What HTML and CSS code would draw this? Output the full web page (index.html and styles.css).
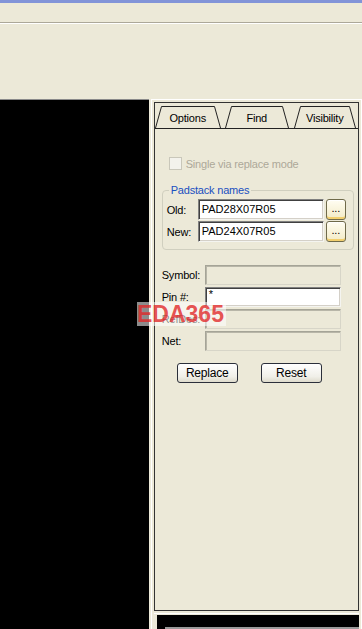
FILE: index.html
```html
<!DOCTYPE html>
<html>
<head>
  <title>Replace Padstack</title>
  <link rel="stylesheet" href="styles.css">
</head>
<body>
  <div class="titlebar"></div>
  <div class="menubar"></div>
  <div class="toolarea"></div>

  <div class="main">
    <div class="canvas"></div>

    <div class="side">
      <div class="panel">
        <!-- tabs -->
        <div class="tabs">
          <div class="tab tab-options">
            <svg class="tab-shape" width="66" height="22" viewBox="0 0 66 22"><polyline points="0.5,22 6.5,0.5 59.5,0.5 65.5,22" fill="none" stroke="#222" stroke-width="1"/></svg>
            <span>Options</span>
          </div>
          <div class="tab tab-find">
            <svg class="tab-shape" width="64" height="22" viewBox="0 0 64 22"><polyline points="0.5,22 6.5,0.5 57.5,0.5 63.5,22" fill="none" stroke="#222" stroke-width="1"/></svg>
            <span>Find</span>
          </div>
          <div class="tab tab-vis">
            <svg class="tab-shape" width="62" height="22" viewBox="0 0 62 22"><polyline points="0.5,22 6.5,0.5 55.5,0.5 61.5,22" fill="none" stroke="#222" stroke-width="1"/></svg>
            <span>Visibility</span>
          </div>
        </div>

        <div class="page">
          <div class="check-row">
            <span class="checkbox"></span>
            <span>Single via replace mode</span>
          </div>

          <div class="group">
            <span class="legend">Padstack names</span>
            <div class="name-row">
              <span class="name-label">Old:</span>
              <div class="field">PAD28X07R05</div>
              <div class="browse">...</div>
            </div>
            <div class="name-row">
              <span class="name-label">New:</span>
              <div class="field">PAD24X07R05</div>
              <div class="browse">...</div>
            </div>
          </div>

          <div class="filters">
            <div class="filter-row">
              <span class="filter-label">Symbol:</span>
              <div class="field off"></div>
            </div>
            <div class="filter-row">
              <span class="filter-label">Pin #:</span>
              <div class="field pin">*</div>
            </div>
            <div class="filter-row">
              <span class="filter-label">RefDes:</span>
              <div class="field off"></div>
            </div>
            <div class="filter-row">
              <span class="filter-label">Net:</span>
              <div class="field off"></div>
            </div>
          </div>

          <div class="actions">
            <div class="btn">Replace</div>
            <div class="btn">Reset</div>
          </div>
        </div>
      </div>

      <div class="console">
        <div class="console-inner"><div class="console-bar"></div></div>
      </div>
    </div>
  </div>

  <div class="watermark">EDA365</div>
</body>
</html>
```

FILE: styles.css
```css
body {
  margin: 0;
  background-color: #ece9d8;
  font-family: "Liberation Sans", Arial, sans-serif;
  font-size: 11px;
  letter-spacing: -0.2px;
  color: #000;
  height: 629px;
  overflow: hidden;
}

.titlebar {
  height: 3px;
  background-color: #8294d8;
}

.menubar {
  height: 19px;
  border-bottom: 1px solid #aca899;
}

.toolarea {
  height: 75px;
  border-top: 1px solid #fff;
}

.main {
  display: flex;
  height: 530px;
}

.canvas {
  width: 150px;
  background-color: #000;
  border-top: 1px solid #8a8a8a;
}

.side {
  margin-left: 2px;
  width: 207px;
  border-top: 1px solid #fff;
  border-left: 1px solid #fff;
  border-right: 1px solid #fff;
  padding: 2px 2px 0 2px;
}

.panel {
  border: 1px solid #333;
  height: 507px;
}

/* tabs */
.tabs {
  display: flex;
  margin-top: 3px;
  border-bottom: 1px solid #222;
}

.tab {
  position: relative;
  height: 22px;
  display: flex;
  justify-content: center;
  align-items: center;
  padding-top: 2px;
  box-sizing: border-box;
}

.tab-shape {
  position: absolute;
  left: 0;
  top: 0;
}

.tab span {
  position: relative;
}

.tab-options { width: 66px; margin-right: 4px; }
.tab-find { width: 64px; margin-right: 5px; }
.tab-vis { width: 62px; }

/* page */
.page {
  padding: 28px 4px 0 7px;
}

.check-row {
  display: flex;
  align-items: center;
  gap: 4px;
  color: #aca899;
  height: 13px;
  margin-left: 7px;
}

.checkbox {
  width: 11px;
  height: 11px;
  border: 1px solid #c9c7ba;
  background-color: #f3f2ec;
}

.group {
  position: relative;
  box-sizing: border-box;
  height: 60px;
  margin-top: 20px;
  padding: 8px 6px 0 4px;
  border: 1px solid #d0cfbf;
  border-radius: 4px;
}

.group .legend {
  position: absolute;
  left: 6px;
  top: -7px;
  padding: 0 2px;
  color: #1a4fc0;
  background-color: #ece9d8;
  line-height: 12px;
}

.name-row {
  display: flex;
  align-items: center;
  height: 21px;
  margin-bottom: 1px;
}

.name-label {
  width: 31px;
}

.field {
  box-sizing: border-box;
  height: 21px;
  padding: 3px 3px 0;
  letter-spacing: 0;
  background-color: #fff;
  border: 1px solid;
  border-color: #808080 #f4f4f0 #f4f4f0 #808080;
  box-shadow: inset 1px 1px 0 #404040, inset -1px -1px 0 #d4d0c8;
}

.name-row .field {
  width: 126px;
}

.browse {
  box-sizing: border-box;
  margin-left: 2px;
  width: 20px;
  height: 21px;
  text-align: center;
  line-height: 17px;
  border: 1px solid #6f6a4a;
  border-radius: 3px;
  background: linear-gradient(#fffdf2, #f3ebc6);
  box-shadow: inset 0 -2px 0 #f2cf6e, inset 0 1px 0 #fff;
}

.filters {
  margin-top: 15px;
  display: flex;
  flex-direction: column;
  gap: 2px;
}

.filter-row {
  display: flex;
  align-items: center;
  height: 20px;
}

.filter-label {
  width: 43px;
}

.filters .field {
  width: 136px;
  height: 20px;
}

.filters .field.pin {
  padding-top: 1px;
  line-height: 11px;
}

.field.off {
  background-color: #ece9d8;
  border-color: #a5a497 #d7d5c8 #d7d5c8 #a5a497;
  box-shadow: inset 1px 1px 0 #b8b6a8, inset -1px -1px 0 #ece9d8;
}

.actions {
  display: flex;
  gap: 23px;
  margin: 12px 0 0 15px;
}

.btn {
  box-sizing: border-box;
  width: 61px;
  height: 20px;
  text-align: center;
  line-height: 18px;
  font-size: 12px;
  border: 1px solid #2b2f3a;
  border-radius: 3px;
  background: linear-gradient(#ffffff, #f0efe8 70%, #dedbcc);
}

/* bottom console */
.console {
  margin-top: 2px;
  border-top: 1px solid #fff;
  padding: 1px 0 0 3px;
}

.console-inner {
  height: 20px;
  background-color: #000;
  padding: 12px 0 0 8px;
  box-sizing: border-box;
}

.console-bar {
  height: 8px;
  background-color: #9a9a9a;
}

.watermark {
  position: absolute;
  left: 137px;
  top: 302px;
  font-size: 23px;
  font-weight: bold;
  letter-spacing: 0;
  color: rgba(225, 40, 40, 0.8);
  background-color: rgba(255, 255, 255, 0.55);
  line-height: 24px;
  padding: 0 2px 0 0;
}
```
